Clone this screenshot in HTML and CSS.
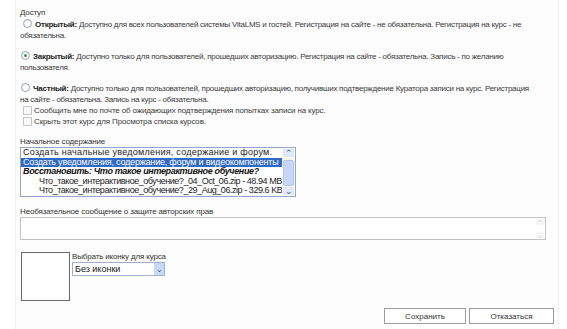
FILE: index.html
```html
<!DOCTYPE html>
<html lang="ru">
<head>
    <meta charset="UTF-8">
    <title>Настройки курса</title>
    <link rel="stylesheet" href="styles.css">
</head>
<body>
    <div class="panel">
        <div class="caption">Доступ</div>
        <p class="access"><span class="radio first"></span><b>Открытый:</b> Доступно для всех пользователей системы VitaLMS и гостей. Регистрация на сайте - не обязательна. Регистрация на курс - не<br>обязательна.</p>
        <p class="access"><span class="radio checked"></span><b>Закрытый:</b> Доступно только для пользователей, прошедших авторизацию. Регистрация на сайте - обязательна. Запись - по желанию<br>пользователя.</p>
        <p class="access last"><span class="radio"></span><b>Частный:</b> Доступно только для пользователей, прошедших авторизацию, получивших подтверждение Куратора записи на курс. Регистрация<br>на сайте - обязательна. Запись на курс - обязательна.</p>
        <div class="check"><span class="box"></span>Сообщить мне по почте об ожидающих подтверждения попытках записи на курс.</div>
        <div class="check"><span class="box"></span>Скрыть этот курс для Просмотра списка курсов.</div>

        <div class="caption gap">Начальное содержание</div>
        <div class="listbox">
            <div class="list-items">
                <div class="item wide">Создать начальные уведомления, содержание и форум.</div>
                <div class="item selected">Создать уведомления, содержание, форум и видеокомпоненты</div>
                <div class="item group">Восстановить: Что такое интерактивное обучение?</div>
                <div class="item sub">Что_такое_интерактивное_обучение?_04_Oct_06.zip - 48.94 MB</div>
                <div class="item sub">Что_такое_интерактивное_обучение?_29_Aug_06.zip - 329.6 KB</div>
            </div>
            <div class="scrollbar">
                <span class="arrow">&#8963;</span>
                <span class="track"><span class="thumb"></span></span>
                <span class="arrow">&#8964;</span>
            </div>
        </div>

        <div class="caption gap">Необязательное сообщение о защите авторских прав</div>
        <div class="textarea">
            <div class="text-scroll">
                <span class="arrow dim">&#8963;</span>
                <span class="arrow dim">&#8964;</span>
            </div>
        </div>

        <div class="icon-row">
            <div class="icon-preview"></div>
            <div class="icon-pick">
                <div class="pick-label">Выбрать иконку для курса</div>
                <div class="select">
                    <span class="select-text">Без иконки</span>
                    <span class="select-btn">&#8964;</span>
                </div>
            </div>
        </div>

        <div class="actions">
            <button class="btn save">Сохранить</button>
            <button class="btn cancel">Отказаться</button>
        </div>
    </div>
</body>
</html>
```

FILE: styles.css
```css
body {
    margin: 0;
    background-color: #fff;
    font-family: "Liberation Sans", Arial, sans-serif;
    font-size: 8px;
    line-height: 11px;
    letter-spacing: -0.15px;
    color: #3a3a3a;
}
.panel {
    margin-left: 15px;
    width: 534px;
    padding: 7px 4px 5px 4px;
    border: 1px solid #f0f0f0;
    border-top: none;
    background-color: #fdfdfd;
}
.caption {
    color: #333;
}
.caption.gap {
    margin-top: 9px;
}
.access {
    margin: 0 0 10px 0;
    white-space: nowrap;
    letter-spacing: -0.25px;
}
.access:first-of-type {
    margin-top: 1px;
}
.access.last {
    margin-bottom: 0;
}
.access b {
    color: #222;
}
.radio {
    display: inline-block;
    width: 7px;
    height: 7px;
    margin: 0 3px 0 1px;
    border: 1px solid #8ea6c2;
    border-radius: 50%;
    background: radial-gradient(circle at 60% 60%, #fff 30%, #e3e8ef 100%);
    vertical-align: -1px;
    position: relative;
}
.radio.first {
    margin-left: 3px;
}
.radio.checked::after {
    content: "";
    position: absolute;
    left: 2px;
    top: 2px;
    width: 3px;
    height: 3px;
    border-radius: 50%;
    background-color: #2ea02e;
}
.check {
    display: flex;
    align-items: center;
    height: 11px;
}
.box {
    width: 7px;
    height: 7px;
    margin: 0 2px 0 3px;
    border: 1px solid #c4c4c4;
    background-color: #fafafa;
}
.listbox {
    display: flex;
    width: 274px;
    height: 48px;
    border: 1px solid #8fa8c8;
    background-color: #fff;
}
.list-items {
    flex: 1;
    font-size: 9px;
    line-height: 9.6px;
    letter-spacing: 0;
    color: #222;
    overflow: hidden;
}
.item {
    padding-left: 2px;
    white-space: nowrap;
}
.item.wide {
    letter-spacing: 0.25px;
}
.item.selected {
    letter-spacing: -0.2px;
    background-color: #3169c6;
    color: #fff;
}
.item.group {
    letter-spacing: -0.35px;
    font-weight: bold;
    font-style: italic;
    color: #111;
}
.item.sub {
    padding-left: 18px;
    letter-spacing: -0.45px;
}
.scrollbar {
    display: flex;
    flex-direction: column;
    width: 13px;
    background-color: #f4f4f0;
}
.arrow {
    display: flex;
    align-items: center;
    justify-content: center;
    height: 10px;
    font-size: 9px;
    color: #4d6185;
    background-color: #dfe8fb;
    border: 1px solid #fff;
    box-sizing: border-box;
}
.track {
    flex: 1;
    display: flex;
    flex-direction: column;
    justify-content: flex-end;
}
.thumb {
    height: 24px;
    margin: 0 1px;
    background-color: #c6d5f8;
    border: 1px solid #b3c6ef;
    border-radius: 2px;
}
.textarea {
    display: flex;
    justify-content: flex-end;
    width: 524px;
    height: 21px;
    border: 1px solid #c0c4c8;
    background-color: #fff;
}
.text-scroll {
    display: flex;
    flex-direction: column;
    justify-content: space-between;
    width: 10px;
}
.arrow.dim {
    height: 8px;
    font-size: 7px;
    color: #c8c8c8;
    background-color: #f6f6f6;
}
.icon-row {
    display: flex;
    margin-top: 12px;
}
.icon-preview {
    width: 47px;
    height: 47px;
    margin-left: 1px;
    border: 1px solid #6a6a6a;
    background-color: #fff;
}
.pick-label {
    margin: 0 0 0 2px;
    line-height: 10px;
    color: #333;
}
.select {
    display: flex;
    align-items: center;
    width: 91px;
    height: 12px;
    margin-left: 2px;
    border: 1px solid #9fb1cc;
    background-color: #fff;
}
.select-text {
    flex: 1;
    padding-left: 2px;
    font-size: 9px;
    letter-spacing: 0;
    color: #222;
}
.select-btn {
    display: flex;
    align-items: center;
    justify-content: center;
    width: 10px;
    height: 12px;
    font-size: 8px;
    color: #3a5a9a;
    background-color: #c9d8f7;
}
.actions {
    display: flex;
    justify-content: flex-end;
    gap: 3px;
    margin-top: 7px;
}
.btn {
    height: 16px;
    padding: 0;
    font-family: "Liberation Sans", Arial, sans-serif;
    font-size: 8px;
    color: #333;
    background-color: #fff;
    border: 1px solid #9c9c9c;
}
.btn.save {
    width: 82px;
}
.btn.cancel {
    width: 85px;
}
```
